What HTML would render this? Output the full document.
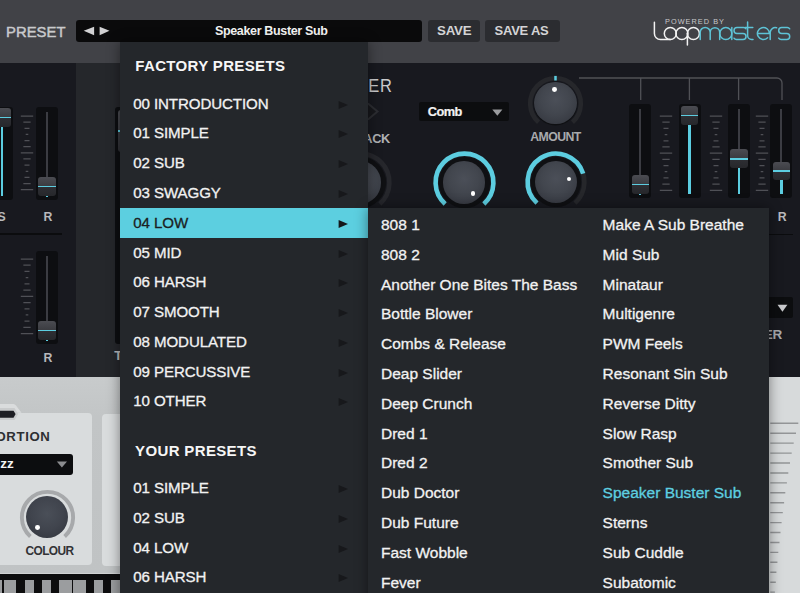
<!DOCTYPE html>
<html><head><meta charset="utf-8"><style>
html,body{margin:0;padding:0;}
body{width:800px;height:593px;overflow:hidden;position:relative;background:#1b1c20;font-family:"Liberation Sans",sans-serif;}
body>div,body>svg{position:absolute;}
.t{white-space:nowrap;line-height:1;}
</style></head><body>
<div style="left:0px;top:63px;width:75.5px;height:314px;background:#18191f;"></div>
<div style="left:75.5px;top:63px;width:44.5px;height:314px;background:#25272b;"></div>
<div style="left:368px;top:63px;width:432px;height:314px;background:#18191f;"></div>
<div style="left:0px;top:0px;width:800px;height:63px;background:#414247;"></div>
<div class="t" style="left:6px;top:25px;font-size:14.8px;font-weight:normal;color:#c9cacc;letter-spacing:0.05px;-webkit-text-stroke:0.45px #c9cacc;">PRESET</div>
<div style="left:76px;top:20px;width:346px;height:22px;background:#0a0a0b;border-radius:3px;"></div>
<svg style="left:83px;top:26px" width="28" height="10" viewBox="0 0 28 10"><polygon points="0.7,4.85 11.1,0.7 11.1,9.3" fill="#d2d2d4"/><polygon points="16.6,0.7 26.5,4.85 16.6,9.3" fill="#d2d2d4"/></svg>
<div class="t" style="left:215px;top:25px;font-size:12.5px;font-weight:bold;color:#f4f4f4;letter-spacing:-0.35px;">Speaker Buster Sub</div>
<div style="left:428px;top:20px;width:52px;height:21.5px;background:#2b2c30;border-radius:3px;"></div>
<div style="left:485px;top:20px;width:74.5px;height:21.5px;background:#2b2c30;border-radius:3px;"></div>
<div class="t" style="left:437px;top:24px;font-size:13.3px;font-weight:bold;color:#d4d4d6;letter-spacing:-0.2px;">SAVE</div>
<div class="t" style="left:494.6px;top:24px;font-size:13px;font-weight:bold;color:#d4d4d6;letter-spacing:-0.25px;">SAVE AS</div>
<div class="t" style="left:665px;top:18px;font-size:7.3px;font-weight:normal;color:#c8c8ca;letter-spacing:1.05px;">POWERED BY</div>
<svg style="left:640px;top:15px" width="160" height="35" viewBox="640 15 160 35" fill="none" stroke-width="1.5" stroke-linecap="round">
<path d="M654.4,22.2 V33.5 A6,6 0 0 0 660.4,39.5 H670.3" stroke="#f2f2f2"/>
<circle cx="670.3" cy="33.5" r="6" stroke="#f2f2f2"/>
<circle cx="681.9" cy="33.5" r="6" stroke="#f2f2f2"/>
<circle cx="693.4" cy="33.5" r="6" stroke="#f2f2f2"/>
<path d="M687.4,33.5 V45" stroke="#f2f2f2"/>
<path d="M700.2,39.5 V32.4 A5,5 0 0 1 710.2,32.4 V39.5 M710.2,32.4 A4.75,4.75 0 0 1 719.7,32.4 V39.5" stroke="#5ec3d6"/>
<circle cx="725.8" cy="33.5" r="6" stroke="#5ec3d6"/>
<path d="M731.8,27.5 V39.5" stroke="#5ec3d6"/>
<path d="M746,28.8 A3,3 0 0 0 743,27.5 H737 A3,3 0 0 0 737,33.5 H743 A3,3 0 0 1 743,39.5 H737 A3,3 0 0 1 734,38.2" stroke="#5ec3d6"/>
<path d="M747.6,22 V35.5 A4,4 0 0 0 751.6,39.5 H753 M745,27.6 H752.8" stroke="#5ec3d6"/>
<path d="M757.4,33.5 H769.4 A6,6 0 1 0 767.6,37.8" stroke="#5ec3d6"/>
<path d="M770.2,39.5 V32.5 A5,5 0 0 1 776.6,27.8" stroke="#5ec3d6"/>
<path d="M789.7,28.8 A3,3 0 0 0 786.7,27.5 H781.7 A3,3 0 0 0 781.7,33.5 H786.7 A3,3 0 0 1 786.7,39.5 H781.7 A3,3 0 0 1 778.7,38.2" stroke="#5ec3d6"/>
</svg>
<div style="left:-9px;top:107px;width:22px;height:93px;background:#0d0e11;border-radius:3px;"></div>
<div style="left:1.0px;top:111.5px;width:2.0px;height:-1.5px;background:#3b3c42;"></div>
<div style="left:0.7px;top:126.5px;width:2.6px;height:69.5px;background:#5ccde0;"></div>
<div style="left:-6.800000000000001px;top:108px;width:17.6px;height:18.5px;background:linear-gradient(#4b4c52,#3a3b40 50%,#2e2f34 52%,#26272b);border-radius:3px;"></div>
<div style="left:-6.800000000000001px;top:116.5px;width:17.6px;height:1.7px;background:#5ccde0;"></div>
<svg style="left:19.4px;top:113px" width="16" height="80" viewBox="19.4 113 16 80"><path d="M21.20,116.00H33.60M23.75,122.14H31.05M24.90,128.28H29.90M26.10,134.42H28.70M24.90,140.56H29.90M23.75,146.70H31.05M21.20,152.84H33.60M23.75,158.98H31.05M24.90,165.12H29.90M26.10,171.26H28.70M24.90,177.40H29.90M23.75,183.54H31.05M21.20,189.68H33.60" stroke="#4f5056" stroke-width="1.25"/></svg>
<div style="left:36px;top:107px;width:22px;height:93px;background:#0d0e11;border-radius:3px;"></div>
<div style="left:46.0px;top:111.5px;width:2.0px;height:67.5px;background:#3b3c42;"></div>
<div style="left:46.0px;top:195.5px;width:2.0px;height:1.8px;background:#5ccde0;"></div>
<div style="left:38.2px;top:177px;width:17.6px;height:18.5px;background:linear-gradient(#4b4c52,#3a3b40 50%,#2e2f34 52%,#26272b);border-radius:3px;"></div>
<div style="left:38.2px;top:185.5px;width:17.6px;height:1.7px;background:#5ccde0;"></div>
<div class="t" style="left:43.6px;top:211px;font-size:12.3px;font-weight:bold;color:#b8b9bc;letter-spacing:0px;">R</div>
<div class="t" style="left:-2.5px;top:211px;font-size:12.3px;font-weight:bold;color:#b8b9bc;letter-spacing:0px;">S</div>
<div style="left:0px;top:233.3px;width:62px;height:1.5px;background:#0b0c0e;"></div>
<div style="left:36px;top:251px;width:22px;height:93.4px;background:#0d0e11;border-radius:3px;"></div>
<div style="left:46.0px;top:255.5px;width:2.0px;height:67.5px;background:#3b3c42;"></div>
<div style="left:46.0px;top:339.5px;width:2.0px;height:1.8px;background:#5ccde0;"></div>
<div style="left:38.2px;top:321px;width:17.6px;height:18.5px;background:linear-gradient(#4b4c52,#3a3b40 50%,#2e2f34 52%,#26272b);border-radius:3px;"></div>
<div style="left:38.2px;top:329.5px;width:17.6px;height:1.7px;background:#5ccde0;"></div>
<svg style="left:19.4px;top:255.60000000000002px" width="16" height="81" viewBox="19.4 255.60000000000002 16 81"><path d="M21.20,258.60H33.60M23.75,264.82H31.05M24.90,271.04H29.90M26.10,277.26H28.70M24.90,283.48H29.90M23.75,289.70H31.05M21.20,295.92H33.60M23.75,302.14H31.05M24.90,308.36H29.90M26.10,314.58H28.70M24.90,320.80H29.90M23.75,327.02H31.05M21.20,333.24H33.60" stroke="#4f5056" stroke-width="1.25"/></svg>
<div class="t" style="left:43.6px;top:352px;font-size:12.3px;font-weight:bold;color:#b8b9bc;letter-spacing:0px;">R</div>
<div style="left:115.3px;top:107px;width:24.7px;height:237.2px;background:#0d0e11;border-radius:3px;"></div>
<div style="left:117.5px;top:109.5px;width:22.5px;height:42.5px;background:linear-gradient(#4b4c52,#2e2f34);border-radius:3px;"></div>
<div style="left:117.5px;top:130px;width:22.5px;height:2px;background:#5ccde0;"></div>
<div class="t" style="left:114.2px;top:349px;font-size:13px;font-weight:bold;color:#b8b9bc;letter-spacing:0px;">T</div>
<div class="t" style="left:368.3px;top:77px;font-size:16.5px;font-weight:normal;color:#c9cacc;letter-spacing:0.7px;transform:scaleY(1.08);transform-origin:0 0;">ER</div>
<svg style="left:355px;top:103px" width="26" height="17" viewBox="0 0 26 17"><polygon points="13,0.5 22.5,8.5 13,16.5 3.5,8.5" fill="#17181c" stroke="#2c2d32" stroke-width="2"/></svg>
<div class="t" style="left:354.3px;top:133px;font-size:12.8px;font-weight:bold;color:#b0b1b4;letter-spacing:-0.3px;">BACK</div>
<svg style="left:324.5px;top:147.0px" width="71" height="71" viewBox="0 0 71 71" fill="none"><circle cx="35.5" cy="35.5" r="25.599999999999998" fill="#0f1013"/><path d="M16.16,56.98 A28.9,28.9 0 1 1 54.84,56.98" stroke="#26272c" stroke-width="4.6"/></svg>
<div style="left:338.65px;top:161.15px;width:42.7px;height:42.7px;background:radial-gradient(circle at 50% 42%, #4b4f58 0%, #42464e 45%, #353840 85%, #2a2c32 100%);border-radius:50%;"></div>
<div style="left:352.81px;top:193.26px;width:4.8px;height:4.8px;border-radius:50%;background:#fff"></div>
<div style="left:419px;top:101.8px;width:89.7px;height:19.7px;background:#0c0d0f;border-radius:2px;"></div>
<div class="t" style="left:427.7px;top:106px;font-size:12.8px;font-weight:bold;color:#f2f2f2;letter-spacing:-0.5px;-webkit-text-stroke:0.2px #f2f2f2;">Comb</div>
<svg style="left:492px;top:109px" width="11" height="7" viewBox="0 0 11 7"><polygon points="0.3,0.4 10.4,0.4 5.35,6.7" fill="#9a9b9e"/></svg>
<svg style="left:428.5px;top:147.1px" width="71" height="71" viewBox="0 0 71 71" fill="none"><circle cx="35.5" cy="35.5" r="25.599999999999998" fill="#0f1013"/><path d="M16.16,56.98 A28.9,28.9 0 1 1 54.84,56.98" stroke="#26272c" stroke-width="4.6"/><path d="M16.16,56.98 A28.9,28.9 0 1 1 54.84,56.98" stroke="#5ccde0" stroke-width="4.6"/></svg>
<div style="left:442.65px;top:161.25px;width:42.7px;height:42.7px;background:radial-gradient(circle at 50% 42%, #4b4f58 0%, #42464e 45%, #353840 85%, #2a2c32 100%);border-radius:50%;"></div>
<div style="left:470.6px;top:190.92px;width:4.8px;height:4.8px;border-radius:50%;background:#fff"></div>
<svg style="left:524.1px;top:71.6px" width="63" height="63" viewBox="0 0 63 63" fill="none"><circle cx="31.5" cy="31.5" r="22.0" fill="#0f1013"/><path d="M14.57,50.30 A25.3,25.3 0 1 1 48.43,50.30" stroke="#26272b" stroke-width="4.6"/><path d="M31.5,3.8999999999999995 V8.5" stroke="#5ccde0" stroke-width="2.5"/></svg>
<div style="left:534.35px;top:81.85px;width:42.5px;height:42.5px;background:radial-gradient(circle at 50% 42%, #4b4f58 0%, #42464e 45%, #353840 85%, #2a2c32 100%);border-radius:50%;"></div>
<div style="left:552.22px;top:86.73px;width:4.8px;height:4.8px;border-radius:50%;background:#fff"></div>
<div class="t" style="left:530.3px;top:131px;font-size:12.3px;font-weight:bold;color:#a9aaad;letter-spacing:-0.6px;">AMOUNT</div>
<svg style="left:520.7px;top:147.3px" width="70" height="70" viewBox="0 0 70 70" fill="none"><circle cx="35.0" cy="35.0" r="25.099999999999998" fill="#0f1013"/><path d="M16.00,56.11 A28.4,28.4 0 1 1 54.00,56.11" stroke="#26272b" stroke-width="4.6"/><path d="M16.00,56.11 A28.4,28.4 0 1 1 62.16,26.70" stroke="#5ccde0" stroke-width="4.6"/></svg>
<div style="left:534.6px;top:161.20000000000002px;width:42.2px;height:42.2px;background:radial-gradient(circle at 50% 42%, #4b4f58 0%, #42464e 45%, #353840 85%, #2a2c32 100%);border-radius:50%;"></div>
<div style="left:566.59px;top:176.59px;width:4.8px;height:4.8px;border-radius:50%;background:#fff"></div>
<svg style="left:575px;top:74px" width="215" height="30" viewBox="575 74 215 30" fill="none" stroke="#505156" stroke-width="1.3"><path d="M579,78 H777 A5,5 0 0 1 782,83 V100 M640.7,78 V100 M689.4,78 V100 M738.6,78 V100"/></svg>
<div style="left:629.3px;top:104px;width:22.0px;height:94px;background:#0d0e11;border-radius:3px;"></div>
<div style="left:639.3px;top:108.5px;width:2.0px;height:68.5px;background:#3b3c42;"></div>
<div style="left:639.3px;top:193.5px;width:2.0px;height:1.8px;background:#5ccde0;"></div>
<div style="left:631.5px;top:175px;width:17.6px;height:18.5px;background:linear-gradient(#4b4c52,#3a3b40 50%,#2e2f34 52%,#26272b);border-radius:3px;"></div>
<div style="left:631.5px;top:183.5px;width:17.6px;height:1.7px;background:#5ccde0;"></div>
<div style="left:678.7px;top:104px;width:22.0px;height:94px;background:#0d0e11;border-radius:3px;"></div>
<div style="left:688.7px;top:108.5px;width:2.0px;height:-0.5px;background:#3b3c42;"></div>
<div style="left:688.4000000000001px;top:124.5px;width:2.6px;height:69.5px;background:#5ccde0;"></div>
<div style="left:680.9000000000001px;top:106px;width:17.6px;height:18.5px;background:linear-gradient(#4b4c52,#3a3b40 50%,#2e2f34 52%,#26272b);border-radius:3px;"></div>
<div style="left:680.9000000000001px;top:114.5px;width:17.6px;height:1.7px;background:#5ccde0;"></div>
<div style="left:728.1px;top:104px;width:22.0px;height:94px;background:#0d0e11;border-radius:3px;"></div>
<div style="left:738.1px;top:108.5px;width:2.0px;height:42.9px;background:#3b3c42;"></div>
<div style="left:737.8000000000001px;top:167.9px;width:2.6px;height:26.1px;background:#5ccde0;"></div>
<div style="left:730.3000000000001px;top:149.4px;width:17.6px;height:18.5px;background:linear-gradient(#4b4c52,#3a3b40 50%,#2e2f34 52%,#26272b);border-radius:3px;"></div>
<div style="left:730.3000000000001px;top:157.9px;width:17.6px;height:1.7px;background:#5ccde0;"></div>
<div style="left:770.4px;top:104px;width:22.0px;height:94px;background:#0d0e11;border-radius:3px;"></div>
<div style="left:780.4px;top:108.5px;width:2.0px;height:55.1px;background:#3b3c42;"></div>
<div style="left:780.1px;top:180.1px;width:2.6px;height:13.9px;background:#5ccde0;"></div>
<div style="left:772.6px;top:161.6px;width:17.6px;height:18.5px;background:linear-gradient(#4b4c52,#3a3b40 50%,#2e2f34 52%,#26272b);border-radius:3px;"></div>
<div style="left:772.6px;top:170.1px;width:17.6px;height:1.7px;background:#5ccde0;"></div>
<svg style="left:658px;top:112.9px" width="16" height="80" viewBox="658 112.9 16 80"><path d="M659.80,115.90H672.20M662.35,122.09H669.65M663.50,128.28H668.50M664.70,134.47H667.30M663.50,140.66H668.50M662.35,146.85H669.65M659.80,153.04H672.20M662.35,159.23H669.65M663.50,165.42H668.50M664.70,171.61H667.30M663.50,177.80H668.50M662.35,183.99H669.65M659.80,190.18H672.20" stroke="#4f5056" stroke-width="1.25"/></svg>
<svg style="left:707.6px;top:112.9px" width="16" height="80" viewBox="707.6 112.9 16 80"><path d="M709.40,115.90H721.80M711.95,122.09H719.25M713.10,128.28H718.10M714.30,134.47H716.90M713.10,140.66H718.10M711.95,146.85H719.25M709.40,153.04H721.80M711.95,159.23H719.25M713.10,165.42H718.10M714.30,171.61H716.90M713.10,177.80H718.10M711.95,183.99H719.25M709.40,190.18H721.80" stroke="#4f5056" stroke-width="1.25"/></svg>
<svg style="left:753.6px;top:112.9px" width="16" height="80" viewBox="753.6 112.9 16 80"><path d="M755.40,115.90H767.80M757.95,122.09H765.25M759.10,128.28H764.10M760.30,134.47H762.90M759.10,140.66H764.10M757.95,146.85H765.25M755.40,153.04H767.80M757.95,159.23H765.25M759.10,165.42H764.10M760.30,171.61H762.90M759.10,177.80H764.10M757.95,183.99H765.25M755.40,190.18H767.80" stroke="#4f5056" stroke-width="1.25"/></svg>
<div class="t" style="left:777.8px;top:211px;font-size:12.3px;font-weight:bold;color:#b8b9bc;letter-spacing:0px;">R</div>
<div style="left:700px;top:233.5px;width:93px;height:1.5px;background:#0b0c0e;"></div>
<div style="left:700px;top:296.7px;width:93px;height:21.5px;background:#0c0d0f;border-radius:2px;"></div>
<svg style="left:777px;top:304px" width="11" height="8" viewBox="0 0 11 8"><polygon points="0.5,0.7 10.4,0.7 5.45,7.8" fill="#c8c9cc"/></svg>
<div class="t" style="left:737px;top:328px;font-size:13.5px;font-weight:bold;color:#a9aaad;letter-spacing:-0.2px;">FILTER</div>
<div style="left:0px;top:377px;width:800px;height:197px;background:linear-gradient(#c8cbcc,#c2c5c6 20%,#c0c3c4);"></div>
<div style="left:-10px;top:412.7px;width:102px;height:152.8px;background:#d9dcdd;border-radius:4px;"></div>
<svg style="left:0px;top:403px" width="24" height="12" viewBox="0 0 24 12"><path d="M0,1 H13.6 Q15,1 16,2.5 L21.5,9.7 H0 Z" fill="#dadcdd"/></svg>
<svg style="left:0px;top:406px" width="20" height="16" viewBox="0 0 20 16"><path d="M0,2 H14.5 L18.2,8 L14.5,14 H0 Z" fill="#c9cbcc"/><path d="M0,4.7 H13.5 L15.6,8 L13.5,11.7 H0 Z" fill="#1d1e23"/></svg>
<div class="t" style="left:-36.7px;top:430px;font-size:13.2px;font-weight:bold;color:#2e2f32;letter-spacing:0.6px;">DISTORTION</div>
<div style="left:-10px;top:453.5px;width:83px;height:21.0px;background:#0c0d0f;border-radius:3px;"></div>
<div class="t" style="left:0.3px;top:457px;font-size:13.5px;font-weight:bold;color:#f4f4f4;letter-spacing:-0.1px;">zz</div>
<svg style="left:56px;top:461px" width="12" height="8" viewBox="0 0 12 8"><polygon points="0.8,0.5 11,0.5 5.9,6.6" fill="#8a8b8e"/></svg>
<svg style="left:15.6px;top:485.9px" width="63" height="63" viewBox="0 0 63 63" fill="none"><circle cx="31.5" cy="31.5" r="22.650000000000002" fill="rgba(0,0,0,0)"/><path d="M14.37,50.52 A25.6,25.6 0 1 1 48.63,50.52" stroke="#a7a9ab" stroke-width="3.9"/></svg>
<div style="left:26.1px;top:496.4px;width:42.0px;height:42.0px;background:radial-gradient(circle at 50% 42%, #4a4f58, #40444d 50%, #343840 85%, #2b2e35);border-radius:50%;"></div>
<div style="left:35.47px;top:525.26px;width:4.8px;height:4.8px;border-radius:50%;background:#fff"></div>
<div class="t" style="left:25.5px;top:546px;font-size:11.9px;font-weight:bold;color:#323336;letter-spacing:-0.6px;">COLOUR</div>
<div style="left:102px;top:413.5px;width:98px;height:152.0px;background:#d9dcdd;border-radius:4px;"></div>
<div style="left:0px;top:573px;width:800px;height:1px;background:#d0d2d3;"></div>
<div style="left:0px;top:574px;width:800px;height:19px;background:#0d0d0e;"></div>
<div style="left:0px;top:580.3px;width:2px;height:12.7px;background:#9b9d9f;"></div>
<div style="left:3.6px;top:580.3px;width:12.4px;height:12.7px;background:#9b9d9f;"></div>
<div style="left:24.5px;top:580.3px;width:9.1px;height:12.7px;background:#9b9d9f;"></div>
<div style="left:41.7px;top:580.3px;width:9.3px;height:12.7px;background:#9b9d9f;"></div>
<div style="left:59.4px;top:580.3px;width:12.6px;height:12.7px;background:#9b9d9f;"></div>
<div style="left:73.3px;top:580.3px;width:12.5px;height:12.7px;background:#9b9d9f;"></div>
<div style="left:93.9px;top:580.3px;width:9.1px;height:12.7px;background:#9b9d9f;"></div>
<div style="left:111.2px;top:580.3px;width:8.8px;height:12.7px;background:#9b9d9f;"></div>
<div style="left:769px;top:377px;width:31px;height:216px;background:#d7dadb;"></div>
<svg style="left:769px;top:400px" width="31" height="193" viewBox="769 400 31 193"><path d="M770.3,423.30H798.3M770.3,433.23H796M770.3,443.16H793.7M770.3,453.09H791.7M770.3,463.02H790M770.3,472.95H788.3M770.3,482.88H786.9M770.3,492.81H785.3M770.3,502.74H784.1M770.3,512.67H782.8M770.3,522.60H781.6M770.3,532.53H780.5M770.3,542.46H779.5M770.3,552.39H778.3M770.3,562.32H777.4M770.3,572.25H776.4M770.3,582.18H775.8M770.3,592.11H774.9" stroke="#939597" stroke-width="1.4"/></svg>
<div style="left:120px;top:42px;width:248px;height:560px;background:#24272b;box-shadow:0 0 12px rgba(0,0,0,0.45)"></div>
<div class="t" style="left:135.3px;top:58px;font-size:15px;font-weight:bold;color:#f6f6f6;letter-spacing:0.35px;">FACTORY PRESETS</div>
<div class="t" style="left:133.3px;top:96px;font-size:15.1px;font-weight:normal;color:#f2f2f2;letter-spacing:-0.1px;-webkit-text-stroke:0.3px #f2f2f2;">00 INTRODUCTION</div>
<svg style="left:338px;top:99.7px" width="11" height="10" viewBox="0 0 11 10"><polygon points="0.6,1.1 10,5 0.6,8.9" fill="#17181b"/></svg>
<div class="t" style="left:133.3px;top:125px;font-size:15.1px;font-weight:normal;color:#f2f2f2;letter-spacing:-0.1px;-webkit-text-stroke:0.3px #f2f2f2;">01 SIMPLE</div>
<svg style="left:338px;top:129.47px" width="11" height="10" viewBox="0 0 11 10"><polygon points="0.6,1.1 10,5 0.6,8.9" fill="#17181b"/></svg>
<div class="t" style="left:133.3px;top:155px;font-size:15.1px;font-weight:normal;color:#f2f2f2;letter-spacing:-0.1px;-webkit-text-stroke:0.3px #f2f2f2;">02 SUB</div>
<svg style="left:338px;top:159.24px" width="11" height="10" viewBox="0 0 11 10"><polygon points="0.6,1.1 10,5 0.6,8.9" fill="#17181b"/></svg>
<div class="t" style="left:133.3px;top:185px;font-size:15.1px;font-weight:normal;color:#f2f2f2;letter-spacing:-0.1px;-webkit-text-stroke:0.3px #f2f2f2;">03 SWAGGY</div>
<svg style="left:338px;top:189.01px" width="11" height="10" viewBox="0 0 11 10"><polygon points="0.6,1.1 10,5 0.6,8.9" fill="#17181b"/></svg>
<div style="left:120px;top:208px;width:248px;height:30px;background:#5ccfe0;"></div>
<div class="t" style="left:133.3px;top:215px;font-size:15.1px;font-weight:normal;color:#1b1f23;letter-spacing:-0.1px;-webkit-text-stroke:0.3px #1b1f23;">04 LOW</div>
<svg style="left:338px;top:218.78px" width="11" height="10" viewBox="0 0 11 10"><polygon points="0.6,1.1 10,5 0.6,8.9" fill="#15171a"/></svg>
<div class="t" style="left:133.3px;top:245px;font-size:15.1px;font-weight:normal;color:#f2f2f2;letter-spacing:-0.1px;-webkit-text-stroke:0.3px #f2f2f2;">05 MID</div>
<svg style="left:338px;top:248.55px" width="11" height="10" viewBox="0 0 11 10"><polygon points="0.6,1.1 10,5 0.6,8.9" fill="#17181b"/></svg>
<div class="t" style="left:133.3px;top:274px;font-size:15.1px;font-weight:normal;color:#f2f2f2;letter-spacing:-0.1px;-webkit-text-stroke:0.3px #f2f2f2;">06 HARSH</div>
<svg style="left:338px;top:278.32px" width="11" height="10" viewBox="0 0 11 10"><polygon points="0.6,1.1 10,5 0.6,8.9" fill="#17181b"/></svg>
<div class="t" style="left:133.3px;top:304px;font-size:15.1px;font-weight:normal;color:#f2f2f2;letter-spacing:-0.1px;-webkit-text-stroke:0.3px #f2f2f2;">07 SMOOTH</div>
<svg style="left:338px;top:308.09px" width="11" height="10" viewBox="0 0 11 10"><polygon points="0.6,1.1 10,5 0.6,8.9" fill="#17181b"/></svg>
<div class="t" style="left:133.3px;top:334px;font-size:15.1px;font-weight:normal;color:#f2f2f2;letter-spacing:-0.1px;-webkit-text-stroke:0.3px #f2f2f2;">08 MODULATED</div>
<svg style="left:338px;top:337.86px" width="11" height="10" viewBox="0 0 11 10"><polygon points="0.6,1.1 10,5 0.6,8.9" fill="#17181b"/></svg>
<div class="t" style="left:133.3px;top:364px;font-size:15.1px;font-weight:normal;color:#f2f2f2;letter-spacing:-0.1px;-webkit-text-stroke:0.3px #f2f2f2;">09 PERCUSSIVE</div>
<svg style="left:338px;top:367.63px" width="11" height="10" viewBox="0 0 11 10"><polygon points="0.6,1.1 10,5 0.6,8.9" fill="#17181b"/></svg>
<div class="t" style="left:133.3px;top:393px;font-size:15.1px;font-weight:normal;color:#f2f2f2;letter-spacing:-0.1px;-webkit-text-stroke:0.3px #f2f2f2;">10 OTHER</div>
<svg style="left:338px;top:397.4px" width="11" height="10" viewBox="0 0 11 10"><polygon points="0.6,1.1 10,5 0.6,8.9" fill="#17181b"/></svg>
<div class="t" style="left:135.1px;top:443px;font-size:15px;font-weight:bold;color:#f6f6f6;letter-spacing:0.35px;">YOUR PRESETS</div>
<div class="t" style="left:133.3px;top:480px;font-size:15.1px;font-weight:normal;color:#f2f2f2;letter-spacing:-0.1px;-webkit-text-stroke:0.3px #f2f2f2;">01 SIMPLE</div>
<svg style="left:338px;top:484.4px" width="11" height="10" viewBox="0 0 11 10"><polygon points="0.6,1.1 10,5 0.6,8.9" fill="#17181b"/></svg>
<div class="t" style="left:133.3px;top:510px;font-size:15.1px;font-weight:normal;color:#f2f2f2;letter-spacing:-0.1px;-webkit-text-stroke:0.3px #f2f2f2;">02 SUB</div>
<svg style="left:338px;top:514.2px" width="11" height="10" viewBox="0 0 11 10"><polygon points="0.6,1.1 10,5 0.6,8.9" fill="#17181b"/></svg>
<div class="t" style="left:133.3px;top:540px;font-size:15.1px;font-weight:normal;color:#f2f2f2;letter-spacing:-0.1px;-webkit-text-stroke:0.3px #f2f2f2;">04 LOW</div>
<svg style="left:338px;top:543.8px" width="11" height="10" viewBox="0 0 11 10"><polygon points="0.6,1.1 10,5 0.6,8.9" fill="#17181b"/></svg>
<div class="t" style="left:133.3px;top:569px;font-size:15.1px;font-weight:normal;color:#f2f2f2;letter-spacing:-0.1px;-webkit-text-stroke:0.3px #f2f2f2;">06 HARSH</div>
<svg style="left:338px;top:573.2px" width="11" height="10" viewBox="0 0 11 10"><polygon points="0.6,1.1 10,5 0.6,8.9" fill="#17181b"/></svg>
<div style="left:368px;top:208px;width:401px;height:400px;background:#24272b;box-shadow:0 0 12px rgba(0,0,0,0.45)"></div>
<div class="t" style="left:381.0px;top:217px;font-size:15.5px;font-weight:normal;color:#f2f2f2;letter-spacing:0px;-webkit-text-stroke:0.3px #f2f2f2;">808 1</div>
<div class="t" style="left:602.6px;top:217px;font-size:15.5px;font-weight:normal;color:#f2f2f2;letter-spacing:0px;-webkit-text-stroke:0.3px #f2f2f2;">Make A Sub Breathe</div>
<div class="t" style="left:381.0px;top:247px;font-size:15.5px;font-weight:normal;color:#f2f2f2;letter-spacing:0px;-webkit-text-stroke:0.3px #f2f2f2;">808 2</div>
<div class="t" style="left:602.6px;top:247px;font-size:15.5px;font-weight:normal;color:#f2f2f2;letter-spacing:0px;-webkit-text-stroke:0.3px #f2f2f2;">Mid Sub</div>
<div class="t" style="left:381.0px;top:277px;font-size:15.5px;font-weight:normal;color:#f2f2f2;letter-spacing:0px;-webkit-text-stroke:0.3px #f2f2f2;">Another One Bites The Bass</div>
<div class="t" style="left:602.6px;top:277px;font-size:15.5px;font-weight:normal;color:#f2f2f2;letter-spacing:0px;-webkit-text-stroke:0.3px #f2f2f2;">Minataur</div>
<div class="t" style="left:381.0px;top:306px;font-size:15.5px;font-weight:normal;color:#f2f2f2;letter-spacing:0px;-webkit-text-stroke:0.3px #f2f2f2;">Bottle Blower</div>
<div class="t" style="left:602.6px;top:306px;font-size:15.5px;font-weight:normal;color:#f2f2f2;letter-spacing:0px;-webkit-text-stroke:0.3px #f2f2f2;">Multigenre</div>
<div class="t" style="left:381.0px;top:336px;font-size:15.5px;font-weight:normal;color:#f2f2f2;letter-spacing:0px;-webkit-text-stroke:0.3px #f2f2f2;">Combs &amp; Release</div>
<div class="t" style="left:602.6px;top:336px;font-size:15.5px;font-weight:normal;color:#f2f2f2;letter-spacing:0px;-webkit-text-stroke:0.3px #f2f2f2;">PWM Feels</div>
<div class="t" style="left:381.0px;top:366px;font-size:15.5px;font-weight:normal;color:#f2f2f2;letter-spacing:0px;-webkit-text-stroke:0.3px #f2f2f2;">Deap Slider</div>
<div class="t" style="left:602.6px;top:366px;font-size:15.5px;font-weight:normal;color:#f2f2f2;letter-spacing:0px;-webkit-text-stroke:0.3px #f2f2f2;">Resonant Sin Sub</div>
<div class="t" style="left:381.0px;top:396px;font-size:15.5px;font-weight:normal;color:#f2f2f2;letter-spacing:0px;-webkit-text-stroke:0.3px #f2f2f2;">Deep Crunch</div>
<div class="t" style="left:602.6px;top:396px;font-size:15.5px;font-weight:normal;color:#f2f2f2;letter-spacing:0px;-webkit-text-stroke:0.3px #f2f2f2;">Reverse Ditty</div>
<div class="t" style="left:381.0px;top:426px;font-size:15.5px;font-weight:normal;color:#f2f2f2;letter-spacing:0px;-webkit-text-stroke:0.3px #f2f2f2;">Dred 1</div>
<div class="t" style="left:602.6px;top:426px;font-size:15.5px;font-weight:normal;color:#f2f2f2;letter-spacing:0px;-webkit-text-stroke:0.3px #f2f2f2;">Slow Rasp</div>
<div class="t" style="left:381.0px;top:455px;font-size:15.5px;font-weight:normal;color:#f2f2f2;letter-spacing:0px;-webkit-text-stroke:0.3px #f2f2f2;">Dred 2</div>
<div class="t" style="left:602.6px;top:455px;font-size:15.5px;font-weight:normal;color:#f2f2f2;letter-spacing:0px;-webkit-text-stroke:0.3px #f2f2f2;">Smother Sub</div>
<div class="t" style="left:381.0px;top:485px;font-size:15.5px;font-weight:normal;color:#f2f2f2;letter-spacing:0px;-webkit-text-stroke:0.3px #f2f2f2;">Dub Doctor</div>
<div class="t" style="left:602.6px;top:485px;font-size:15.5px;font-weight:normal;color:#5ecfe0;letter-spacing:0px;-webkit-text-stroke:0.3px #5ecfe0;">Speaker Buster Sub</div>
<div class="t" style="left:381.0px;top:515px;font-size:15.5px;font-weight:normal;color:#f2f2f2;letter-spacing:0px;-webkit-text-stroke:0.3px #f2f2f2;">Dub Future</div>
<div class="t" style="left:602.6px;top:515px;font-size:15.5px;font-weight:normal;color:#f2f2f2;letter-spacing:0px;-webkit-text-stroke:0.3px #f2f2f2;">Sterns</div>
<div class="t" style="left:381.0px;top:545px;font-size:15.5px;font-weight:normal;color:#f2f2f2;letter-spacing:0px;-webkit-text-stroke:0.3px #f2f2f2;">Fast Wobble</div>
<div class="t" style="left:602.6px;top:545px;font-size:15.5px;font-weight:normal;color:#f2f2f2;letter-spacing:0px;-webkit-text-stroke:0.3px #f2f2f2;">Sub Cuddle</div>
<div class="t" style="left:381.0px;top:575px;font-size:15.5px;font-weight:normal;color:#f2f2f2;letter-spacing:0px;-webkit-text-stroke:0.3px #f2f2f2;">Fever</div>
<div class="t" style="left:602.6px;top:575px;font-size:15.5px;font-weight:normal;color:#f2f2f2;letter-spacing:0px;-webkit-text-stroke:0.3px #f2f2f2;">Subatomic</div>
</body></html>
